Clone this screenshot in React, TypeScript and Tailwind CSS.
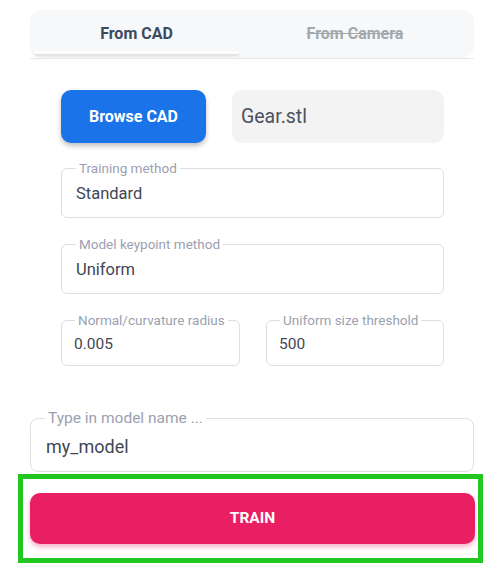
import React from "react";

function Field({
  label,
  value,
  className,
  labelClass,
  valueClass,
}: {
  label: string;
  value: string;
  className: string;
  labelClass: string;
  valueClass: string;
}) {
  return (
    <div className={`relative border border-[#dcdee4] rounded-[6px] flex items-center ${className}`}>
      <span
        className={`absolute bg-white px-[3px] leading-none text-[#9ba1b1] ${labelClass}`}
      >
        {label}
      </span>
      <span className={`text-[#3f4654] ${valueClass}`}>{value}</span>
    </div>
  );
}

export default function App() {
  return (
    <div
      className="w-[500px] h-[582px] bg-white overflow-hidden"
      style={{ fontFamily: "Roboto, 'Liberation Sans', sans-serif" }}
    >
      {/* Tabs */}
      <div className="pt-[10px] ml-[30px] w-[444px] border-b border-[#e6e8ec]">
        <div className="h-[48px] bg-[#f6f8fa] rounded-[12px] flex relative">
          <div className="flex-1 flex flex-col items-center">
            <div className="h-[44px] flex items-center text-[16px] font-bold text-[#3b4a61] -ml-[9px] pt-[4px]">
              From CAD
            </div>
            <div className="mt-[-3px] ml-[-10px] w-[205px] h-[3px] bg-white shadow-[0_2px_3px_rgba(0,0,0,0.12)] rounded-full"></div>
          </div>
          <div className="flex-1 flex flex-col items-center">
            <div className="h-[44px] flex items-center text-[16px] font-bold text-[#a4a8ae] line-through -ml-[16px] pt-[4px]">
              From Camera
            </div>
          </div>
        </div>
      </div>

      {/* Form */}
      <div className="mx-[61px] w-[383px] mt-[31px] flex flex-col">
        <div className="flex gap-[26px] h-[53px]">
          <button className="w-[145px] h-[53px] rounded-[10px] bg-[#1a73e8] text-white font-bold text-[16px] shadow-[0_3px_5px_rgba(0,0,0,0.25)]">
            Browse CAD
          </button>
          <div className="flex-1 h-[53px] rounded-[10px] bg-[#f3f3f3] flex items-center pl-[9px] text-[19.5px] text-[#4b5260]">
            Gear.stl
          </div>
        </div>

        <Field
          label="Training method"
          value="Standard"
          className="mt-[25px] h-[50px] pl-[14px]"
          labelClass="text-[13.5px] -top-[7px] left-[14px]"
          valueClass="text-[16.5px] pt-[3px]"
        />
        <Field
          label="Model keypoint method"
          value="Uniform"
          className="mt-[26px] h-[50px] pl-[14px]"
          labelClass="text-[13.5px] -top-[7px] left-[14px]"
          valueClass="text-[16.5px] pt-[3px]"
        />
        <div className="mt-[26px] flex gap-[26px]">
          <Field
            label="Normal/curvature radius"
            value="0.005"
            className="w-[179px] h-[46px] pl-[12px]"
            labelClass="text-[13.5px] -top-[7px] left-[13px]"
            valueClass="text-[15.5px] pt-[4px]"
          />
          <Field
            label="Uniform size threshold"
            value="500"
            className="flex-1 h-[46px] pl-[12px]"
            labelClass="text-[13.5px] -top-[7px] left-[13px]"
            valueClass="text-[15.5px] pt-[4px]"
          />
        </div>
      </div>

      <div className="ml-[30px] w-[444px] mt-[52px]">
        <Field
          label="Type in model name ..."
          value="my_model"
          className="h-[54px] pl-[15px] rounded-[8px]"
          labelClass="text-[15.5px] -top-[8px] left-[14px]"
          valueClass="text-[18px] text-[#3a3f48] pt-[2px]"
        />
      </div>

      <div className="mt-[2px] ml-[18px] w-[465px] h-[89px] border-[5px] border-[#22c722] pt-[14px] pl-[7px] pr-[3px]">
        <button className="w-full h-[51px] rounded-[10px] bg-[#e91e63] text-white font-bold text-[15.5px] shadow-[0_3px_5px_rgba(233,30,99,0.35)]">
          TRAIN
        </button>
      </div>
    </div>
  );
}
